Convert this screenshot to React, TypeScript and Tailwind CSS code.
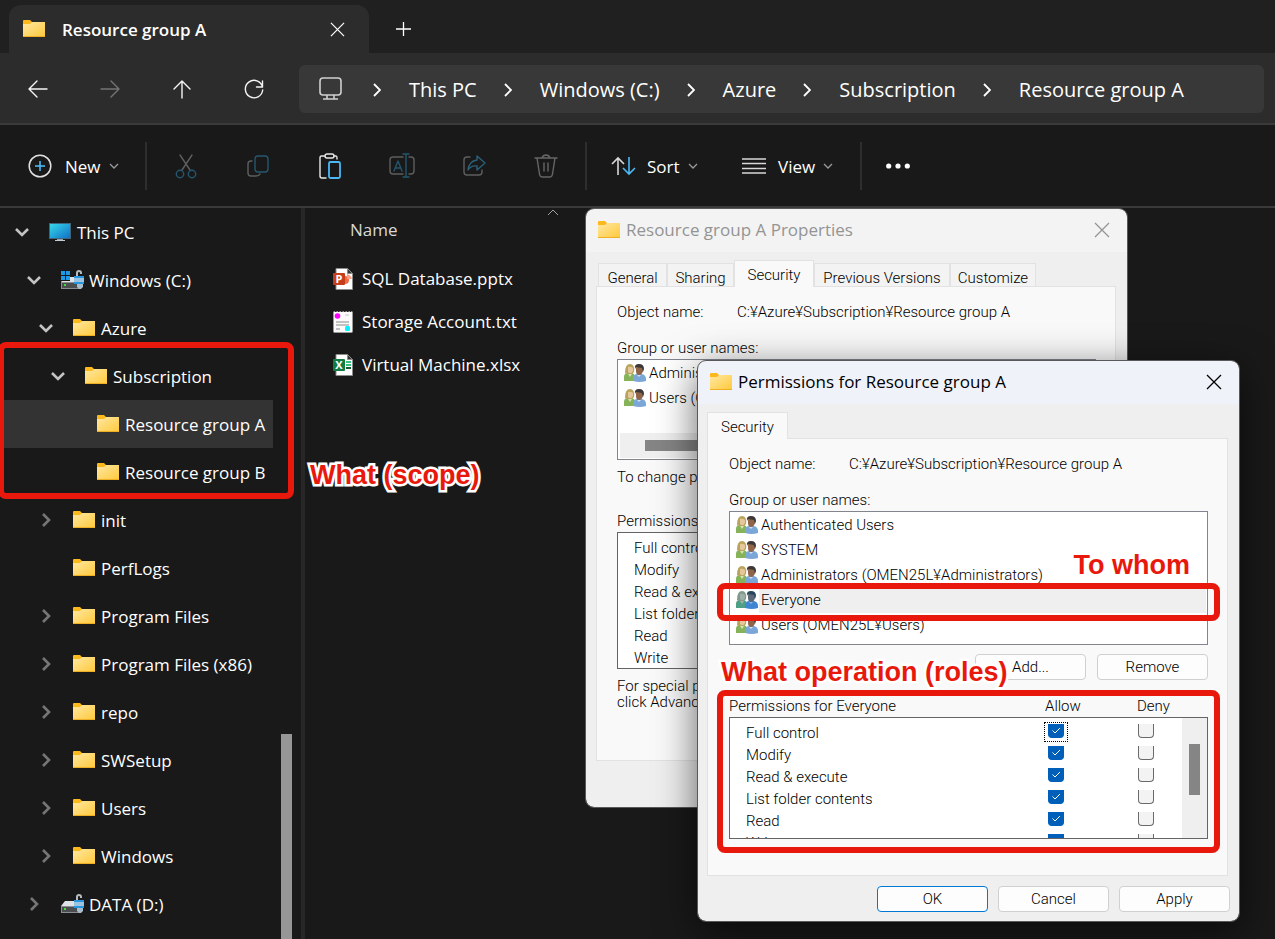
import type { ReactNode } from "react";
import clsx from "clsx";

const UI = "font-['Open_Sans','Noto_Sans',sans-serif]";
const DIALOG = "font-['Roboto','Noto_Sans_CJK_JP',sans-serif] font-light";

const Folder = () => (
  <svg width="22" height="18" viewBox="0 0 22 18" className="shrink-0">
    <defs>
      <linearGradient id="folder" x1="0" y1="0" x2="1" y2="1">
        <stop offset="0" stopColor="#ffe8a3" />
        <stop offset="1" stopColor="#ffc93a" />
      </linearGradient>
    </defs>
    <path d="M0 1Q0 0 1 0H7L9 2H21Q22 2 22 3V8H0Z" fill="#fcb81c" />
    <path d="M0 4H7L9 2H22V17H0Z" fill="url(#folder)" />
    <path d="M0 16H22V17H0Z" fill="#f0ae22" />
  </svg>
);

const Monitor = () => (
  <svg width="22" height="20" viewBox="0 0 22 20" className="shrink-0">
    <defs>
      <linearGradient id="screen" x1="0" y1="0" x2="1" y2="1">
        <stop offset="0" stopColor="#35d8e8" />
        <stop offset="1" stopColor="#1170c8" />
      </linearGradient>
    </defs>
    <rect x="0" y="1" width="22" height="16" fill="#40657a" />
    <rect x="1" y="2" width="20" height="14" fill="url(#screen)" />
    <path d="M8 17H14V18H8Z" fill="#8fa3ad" />
    <path d="M6 18H16V19H6Z" fill="#c5cdd2" />
  </svg>
);

const Drive = ({ system }: { system?: boolean }) => (
  <svg width="24" height="20" viewBox="0 0 24 20" className="-mr-0.5 shrink-0">
    <path d="M4 7H17V12H0Z" fill="#dfe2e6" />
    <path d="M0 12H19V19H0Z" fill="#8b8f93" />
    <path d="M1 13H19V18H1Z" fill="#4b4d50" />
    <rect x="3" y="14" width="2" height="2" fill="#3ee03a" />
    {system && (
      <g>
        <path d="M0 1H9V11H0Z" fill="#191919" />
        <path d="M0 1H4V5H0ZM5 1H9V5H5ZM0 6H4V10H0ZM5 6H9V10H5Z" fill="#1e9be8" />
      </g>
    )}
    <path d="M16 6V3Q16 1 18 1T20 3V4" fill="none" stroke="#b4bcc2" strokeWidth="2" />
    <rect x="13" y="6" width="10" height="8" fill="#9cc3e0" />
    <path d="M13 6H23V8H13ZM13 12H23V14H13Z" fill="#2796df" />
    <path d="M16 14H22V17L20 19H18L16 17Z" fill="#a9bccb" />
  </svg>
);

const Users = ({ tinted }: { tinted?: boolean }) => (
  <svg width="22" height="19" viewBox="0 0 22 19" className="shrink-0">
    <path d="M0 17V13Q0 9 4 9H8Q11 10 11 13V17Z" fill={tinted ? "#4d9f86" : "#86b35a"} />
    <path d="M1 9Q1 0 6 0T10 8L8 10H3Z" fill={tinted ? "#7f9a8c" : "#b8a45c"} />
    <path d="M4 3Q7 2 9 4V7Q7 11 4 8Z" fill={tinted ? "#9fb0a8" : "#e6c79c"} />
    <path d="M4 10L6 13L8 10Z" fill={tinted ? "#a5b3a8" : "#d5e4b4"} />
    <path d="M9 17V14Q10 10 13 10H18Q22 11 22 15V17Q16 19 9 17Z" fill={tinted ? "#3f86d2" : "#7ba6d8"} />
    <path d="M12 4Q12 1 15 1T19 4V7Q18 11 15 11T12 7Z" fill={tinted ? "#5c6878" : "#8f6448"} />
    <path d="M11 5Q10 0 15 0T20 5L19 8L18 4L12 3Z" fill={tinted ? "#29465f" : "#3d3836"} />
    <path d="M13 11L15 13L17 11Z" fill={tinted ? "#8fb8e8" : "#cfe0f4"} />
  </svg>
);

const Cross = ({ size }: { size: number }) => (
  <svg width={size} height={size} viewBox="0 0 16 16" fill="none" stroke="currentColor" strokeWidth="1.300">
    <path d="M1 1L15 15M15 1L1 15" />
  </svg>
);

const Caret = () => (
  <svg width="10" height="6" viewBox="0 0 10 6" fill="none" stroke="#9a9a9a" strokeWidth="1.300">
    <path d="M1 1L5 5L9 1" />
  </svg>
);

const Glyph = ({ children, color = "#f5f5f5" }: { children: ReactNode; color?: string }) => (
  <svg width="26" height="26" viewBox="0 0 26 26" fill="none" stroke={color} strokeWidth="1.400" strokeLinecap="round" strokeLinejoin="round">
    {children}
  </svg>
);

const navItems = [
  { label: "Back", color: "#f5f5f5", icon: <path d="M22 13H4M12 5L4 13L12 21" /> },
  { label: "Forward", color: "#747474", icon: <path d="M4 13H22M14 5L22 13L14 21" /> },
  { label: "Up", color: "#f5f5f5", icon: <path d="M13 22V5M5 13L13 5L21 13" /> },
  { label: "Refresh", color: "#f5f5f5", icon: <path d="M21.500 11A8.700 8.700 0 1 0 21.700 14M21.500 5V11H15.500" /> },
];

const crumbs = ["This PC", "Windows (C:)", "Azure", "Subscription", "Resource group A"];

const actions = [
  {
    label: "Cut",
    icon: (
      <>
        <path d="M7 2L17 17M19 2L9 17" stroke="#5e5e5e" />
        <circle cx="7" cy="21" r="3.700" stroke="#24576f" />
        <circle cx="19" cy="21" r="3.700" stroke="#24576f" />
      </>
    ),
  },
  {
    label: "Copy",
    icon: (
      <>
        <path d="M7 8H6Q3 8 3 11V20Q3 23 6 23H11Q14 23 15 21" stroke="#5e5e5e" />
        <rect x="10" y="3" width="13" height="16" rx="3" stroke="#24576f" />
      </>
    ),
  },
  {
    label: "Paste",
    icon: (
      <>
        <path d="M8 3H4.500Q3 3 3 5V23Q3 25 5 25H9M17 3H19Q20 3 20 5V6" stroke="#e8e8e8" />
        <rect x="8" y="1" width="9" height="4" rx="2" stroke="#e8e8e8" />
        <rect x="12" y="9" width="11" height="16" rx="1.500" stroke="#4cb8f5" strokeWidth="1.800" />
      </>
    ),
  },
  {
    label: "Rename",
    icon: (
      <>
        <path d="M14 4H4Q1 4 1 7V18Q1 21 4 21H14M20 4H22Q25 4 25 7V18Q25 21 22 21H20" stroke="#5e5e5e" />
        <path d="M5 18L9 8L13 18M6.500 15H11.500M14 1H20M14 24H20M17 1V24" stroke="#24576f" />
      </>
    ),
  },
  {
    label: "Share",
    icon: (
      <>
        <path d="M9 4H6Q3 4 3 7V19Q3 22 6 22H18Q21 22 21 19V17" stroke="#5e5e5e" />
        <path d="M16 3L24 10L16 17V13Q10 12 7 17Q8 8 16 7Z" stroke="#2c6078" />
      </>
    ),
  },
  {
    label: "Delete",
    icon: (
      <>
        <path d="M2 5H24M9 5Q10 2 13 2T17 5M4 5L6.500 21Q7 24 9 24H17Q19 24 19.500 21L22 5M11 10V18M15 10V18" stroke="#666" />
      </>
    ),
  },
];

type Node = { name: string; state?: "open" | "closed"; icon?: ReactNode; pad: string; selected?: boolean };

const tree: Node[] = [
  { name: "This PC", state: "open", icon: <Monitor />, pad: "pl-[11px]" },
  { name: "Windows (C:)", state: "open", icon: <Drive system />, pad: "pl-[23px]" },
  { name: "Azure", state: "open", pad: "pl-[35px]" },
  { name: "Subscription", state: "open", pad: "pl-[47px]" },
  { name: "Resource group A", pad: "pl-[59px]", selected: true },
  { name: "Resource group B", pad: "pl-[59px]" },
  { name: "init", state: "closed", pad: "pl-[35px]" },
  { name: "PerfLogs", pad: "pl-[35px]" },
  { name: "Program Files", state: "closed", pad: "pl-[35px]" },
  { name: "Program Files (x86)", state: "closed", pad: "pl-[35px]" },
  { name: "repo", state: "closed", pad: "pl-[35px]" },
  { name: "SWSetup", state: "closed", pad: "pl-[35px]" },
  { name: "Users", state: "closed", pad: "pl-[35px]" },
  { name: "Windows", state: "closed", pad: "pl-[35px]" },
  { name: "DATA (D:)", state: "closed", icon: <Drive />, pad: "pl-[23px]" },
];

const TreeRow = ({ node }: { node: Node }) => (
  <button
    type="button"
    className={clsx(
      "flex h-12 w-[270px] items-center text-left whitespace-nowrap",
      node.pad,
      node.selected && "bg-[#333333]"
    )}
  >
    <span className="mr-[19px] flex w-4 shrink-0 justify-center">
      {node.state && (
        <svg width="16" height="16" viewBox="0 0 16 16" fill="none" strokeWidth="2.600" stroke={node.state === "open" ? "#c4c4c4" : "#767676"}>
          <path d={node.state === "open" ? "M2 5L8 11L14 5" : "M5 2L11 8L5 14"} />
        </svg>
      )}
    </span>
    {node.icon ?? <Folder />}
    <span className="ml-1.5 pt-0.5">{node.name}</span>
  </button>
);

const OfficeIcon = ({ letter, color, children }: { letter: string; color: string; children: ReactNode }) => (
  <svg width="20" height="22" viewBox="0 0 20 22" className="shrink-0">
    <path d="M3 0.500H14.500L19.500 5.500V21.500H3Z" fill="#fff" stroke="#8b8b8b" />
    <path d="M14.500 0.500V5.500H19.500Z" fill="#333" stroke="#8b8b8b" />
    {children}
    <rect x="0" y="5" width="12" height="12" rx="1" fill={color} />
    <text x="6" y="15" fontSize="11" fontWeight="700" textAnchor="middle" fill="#fff">
      {letter}
    </text>
  </svg>
);

const files = [
  {
    name: "SQL Database.pptx",
    icon: (
      <OfficeIcon letter="P" color="#c43e1c">
        <path d="M12 8A4 4 0 0 1 12 16Z" fill="#ed6c47" />
        <path d="M14 6V11H19Q18 7 14 6Z" fill="#ff9e80" />
      </OfficeIcon>
    ),
  },
  {
    name: "Storage Account.txt",
    icon: (
      <svg width="20" height="23" viewBox="0 0 20 23" className="shrink-0">
        <rect x="0.500" y="1.500" width="19" height="21" rx="1" fill="#fafafa" stroke="#9a9a9a" />
        <path d="M2 1H18" stroke="#222" strokeWidth="2" strokeDasharray="1.500 1.500" />
        <path d="M3 12H16M3 15H16M3 19H7" stroke="#c2c2c2" strokeWidth="2" />
        <path d="M12 5H16" stroke="#c9c9c9" />
        <circle cx="4.500" cy="6" r="2.800" fill="#ff00ff" />
        <rect x="12" y="16" width="5" height="5" rx="1.500" fill="#00f6ff" />
      </svg>
    ),
  },
  {
    name: "Virtual Machine.xlsx",
    icon: (
      <OfficeIcon letter="X" color="#107c41">
        <path d="M13 7H18V9H13ZM13 10H18V12H13Z" fill="#33c481" />
        <path d="M13 13H18V15H13Z" fill="#185c37" />
      </OfficeIcon>
    ),
  },
];

const rights = ["Full control", "Modify", "Read & execute", "List folder contents", "Read", "Write"];

const Note = ({ className, children }: { className: string; children: ReactNode }) => (
  <span
    className={clsx(
      "absolute font-['Liberation_Sans',sans-serif] text-[27px] leading-8 font-bold whitespace-nowrap text-[#e8190c] [-webkit-text-stroke:5px_white] [paint-order:stroke_fill]",
      className
    )}
  >
    {children}
  </span>
);

const Highlight = ({ className }: { className: string }) => (
  <div className={clsx("pointer-events-none absolute rounded-lg border-6 border-[#e8190c]", className)} />
);

const Window = ({
  title,
  active,
  className,
  children,
}: {
  title: string;
  active?: boolean;
  className: string;
  children: ReactNode;
}) => (
  <section
    aria-label={title}
    className={clsx(
      "absolute flex flex-col rounded-lg bg-[#efefef] text-black outline-1 outline-[#58585a]",
      DIALOG,
      className
    )}
  >
    <header
      className={clsx(
        "flex h-[43px] shrink-0 items-center gap-1.5 rounded-t-lg px-3 pb-0.5 text-[17px] font-normal",
        UI,
        active ? "bg-[#f0f2fa]" : "bg-[#f3f3f3] text-[#949494]"
      )}
    >
      <Folder />
      <h2 className="grow">{title}</h2>
      <button type="button" aria-label={`Close ${title}`} className="mr-[5px]">
        <Cross size={16} />
      </button>
    </header>
    {children}
  </section>
);

const ObjectName = () => (
  <dl className="flex">
    <dt className="w-30">Object name:</dt>
    <dd>C:¥Azure¥Subscription¥Resource group A</dd>
  </dl>
);

const PrincipalRow = ({ name, selected }: { name: string; selected?: boolean }) => (
  <li className="flex h-[25px] items-center gap-px pr-px pl-1.5">
    <Users tinted={selected} />
    <span className={clsx("grow pl-0.5 leading-[25px]", selected && "bg-[#efefef]")}>{name}</span>
  </li>
);

const PushButton = ({ children, primary }: { children: ReactNode; primary?: boolean }) => (
  <button
    type="button"
    className={clsx("h-[26px] w-[111px] rounded-sm border bg-[#fdfdfd]", primary ? "border-[#0078d4]" : "border-[#d0d0d0]")}
  >
    {children}
  </button>
);

const Check = ({ label, checked, focused }: { label: string; checked?: boolean; focused?: boolean }) => (
  <span className={clsx("grid h-5 w-6 justify-center border border-dotted pt-px", focused ? "border-black" : "border-transparent")}>
    <input
      type="checkbox"
      aria-label={label}
      defaultChecked={checked}
      className="col-start-1 row-start-1 h-3.5 w-4 appearance-none rounded-b-sm border border-t-0 border-[#6a6a6a] bg-[#f3f3f3] checked:border-[#005fb8] checked:bg-[#005fb8]"
    />
    {checked && (
      <svg width="16" height="14" viewBox="0 0 16 14" fill="none" stroke="#fff" className="pointer-events-none col-start-1 row-start-1">
        <path d="M4.500 6.500L7 9L12 4" />
      </svg>
    )}
  </span>
);

const PropertiesWindow = () => (
  <Window title="Resource group A Properties" className="top-[209px] left-[586px] h-[598px] w-[541px]">
    <div className="flex grow flex-col px-2.5 pt-2 text-[15px] leading-4">
      <div role="tablist" className="flex items-end pl-0.5">
        {["General", "Sharing", "Security", "Previous Versions", "Customize"].map((tab) => (
          <button
            key={tab}
            type="button"
            role="tab"
            className={clsx(
              "border border-b-0 border-[#e2e2e2] text-center whitespace-nowrap",
              tab === "Security" ? "z-10 -mb-px h-[27px] w-20 bg-[#f9f9f9] pt-0.5" : "h-[23px] bg-[#f3f3f3] pt-1.5",
              tab === "General" && "w-[69px]",
              tab === "Sharing" && "w-[67px]",
              tab === "Previous Versions" && "w-[136px]",
              tab === "Customize" && "w-[86px]"
            )}
          >
            {tab}
          </button>
        ))}
      </div>
      <div className="mr-px h-[475px] border border-[#e2e2e2] bg-[#f9f9f9] pt-[17px] pr-[19px] pl-5">
        <ObjectName />
        <p className="mt-5">Group or user names:</p>
        <ul className="mt-[3px] h-[101px] border border-[#82858d] bg-white pt-px">
          <PrincipalRow name="Administrators (OMEN25L¥Administrators)" />
          <PrincipalRow name="Users (OMEN25L¥Users)" />
          <li aria-hidden className="mx-0.5 mt-[22px] flex h-[25px] items-center bg-[#efefef] pl-[25px]">
            <div className="h-[11px] w-80 bg-[#858585]" />
          </li>
        </ul>
        <p className="mt-[9px]">To change permissions, click Edit.</p>
        <p className="mt-7">Permissions for Administrators</p>
        <ul className="mt-[3px] h-[137px] border border-[#646464] bg-white pt-1 pl-4">
          {rights.map((right) => (
            <li key={right} className="h-[22px] leading-[22px]">
              {right}
            </li>
          ))}
        </ul>
        <p className="mt-[9px] w-80">
          For special permissions or advanced settings,
          <br />
          click Advanced.
        </p>
      </div>
    </div>
  </Window>
);

const principals = [
  "Authenticated Users",
  "SYSTEM",
  "Administrators (OMEN25L¥Administrators)",
  "Everyone",
  "Users (OMEN25L¥Users)",
];

const PermissionsWindow = () => (
  <Window
    title="Permissions for Resource group A"
    active
    className="top-[361px] left-[698px] h-[560px] w-[541px] [box-shadow:0_10px_40px_#000000a0]"
  >
    <div className="flex grow flex-col px-[9px] pt-2 text-[15px] leading-4">
      <div role="tablist" className="flex">
        <button type="button" role="tab" className="z-10 -mb-px h-[27px] w-[81px] border border-b-0 border-[#e2e2e2] bg-[#f9f9f9] pt-0.5">
          Security
        </button>
      </div>
      <div className="mr-0.5 h-[438px] border border-[#e2e2e2] bg-[#f9f9f9] pt-[17px] pr-[19px] pl-[21px]">
        <ObjectName />
        <p className="mt-5">Group or user names:</p>
        <div className="relative mt-[3px]">
          <ul className="h-[134px] border border-[#82858d] bg-white pt-px">
            {principals.map((name) => (
              <PrincipalRow key={name} name={name} selected={name === "Everyone"} />
            ))}
          </ul>
          <Highlight className="-inset-x-3 top-[72px] h-[38px]" />
          <Note className="top-[38px] right-[18px]">To whom</Note>
        </div>
        <div className="relative mt-[9px] flex justify-end gap-[11px]">
          <PushButton>Add...</PushButton>
          <PushButton>Remove</PushButton>
          <Note className="top-0.5 -left-2">What operation (roles)</Note>
        </div>
        <div className="relative mt-[18px]">
          <div className="flex">
            <span className="grow">Permissions for Everyone</span>
            <span className="w-[92px]">Allow</span>
            <span className="w-[71px]">Deny</span>
          </div>
          <div className="mt-[3px] flex h-[122px] overflow-hidden border border-[#646464] bg-white">
            <ul className="grow pt-1 pl-4">
              {rights.map((right, i) => (
                <li key={right} className="flex h-[22px]">
                  <span className="grow leading-[22px]">{right}</span>
                  <span className="w-[90px]">
                    <Check label={`Allow ${right}`} checked focused={i === 0} />
                  </span>
                  <span className="w-12">
                    <Check label={`Deny ${right}`} />
                  </span>
                </li>
              ))}
            </ul>
            <div aria-hidden className="flex w-[25px] justify-center bg-[#efefef] pt-[26px]">
              <div className="h-[51px] w-[11px] bg-[#858585]" />
            </div>
          </div>
          <Highlight className="-inset-x-3 -top-2 h-[163px]" />
        </div>
      </div>
      <footer className="mt-2.5 flex justify-end gap-2.5">
        <PushButton primary>OK</PushButton>
        <PushButton>Cancel</PushButton>
        <PushButton>Apply</PushButton>
      </footer>
    </div>
  </Window>
);

const Divider = () => <div className="h-12 w-0.5 bg-[#2e2e2e]" />;

export default function App() {
  return (
    <main className={clsx("relative flex h-screen w-full flex-col overflow-hidden bg-[#191919] text-[17px] leading-6 text-white", UI)}>
      <div className="flex h-[53px] shrink-0 items-end bg-[#202020] pl-[9px]">
        <div className="flex h-12 w-[360px] items-center rounded-t-xl bg-[#2c2c2c] pr-6 pl-3.5">
          <Folder />
          <span className="ml-[17px] grow pt-0.5 font-semibold">Resource group A</span>
          <button type="button" aria-label="Close tab">
            <Cross size={15} />
          </button>
        </div>
        <button type="button" aria-label="New tab" className="mb-3 ml-[27px]">
          <svg width="15" height="24" viewBox="0 0 15 24" stroke="#fff" strokeWidth="1.300">
            <path d="M7.500 5V19M0 12H15" />
          </svg>
        </button>
      </div>

      <nav className="flex h-[72px] shrink-0 items-center border-b-2 border-[#3a3a3a] bg-[#2c2c2c] pt-0.5 pr-[11px] pl-[25px]">
        <div className="flex w-[274px] gap-[46px]">
          {navItems.map((item) => (
            <button key={item.label} type="button" aria-label={item.label}>
              <Glyph color={item.color}>{item.icon}</Glyph>
            </button>
          ))}
        </div>
        <ol className="flex h-12 grow items-center rounded-md bg-[#383838] pt-0.5 pl-5 text-[20px]">
          <li className="pr-1 pb-0.5">
            <svg width="23" height="24" viewBox="0 0 23 24" fill="none" stroke="#cfcfcf" strokeWidth="1.600">
              <rect x="1" y="1" width="21" height="17" rx="3" />
              <path d="M8 18V22M15 18V22M4 22H19" />
            </svg>
          </li>
          {crumbs.map((crumb) => (
            <li key={crumb} className="flex items-center">
              <svg width="8" height="14" viewBox="0 0 8 14" fill="none" stroke="#fff" strokeWidth="1.800" className="mr-7 ml-[27px]">
                <path d="M1 1L7 7L1 13" />
              </svg>
              <a href="#">{crumb}</a>
            </li>
          ))}
        </ol>
      </nav>

      <div role="toolbar" className="flex h-[83px] shrink-0 items-center border-b-2 border-[#3a3a3a] pl-7">
        <button type="button" className="flex w-[117px] items-center">
          <svg width="24" height="24" viewBox="0 0 24 24" fill="none" strokeWidth="1.500">
            <circle cx="12" cy="12" r="10.800" stroke="#e0e0e0" />
            <path d="M12 7V17M7 12H17" stroke="#4cc2ff" />
          </svg>
          <span className="mr-2 ml-[13px] pt-0.5">New</span>
          <Caret />
        </button>
        <Divider />
        <div className="flex gap-[46px] px-[26px]">
          {actions.map((action) => (
            <button key={action.label} type="button" aria-label={action.label}>
              <Glyph>{action.icon}</Glyph>
            </button>
          ))}
        </div>
        <Divider />
        <button type="button" className="ml-6 flex w-[131px] items-center">
          <svg width="25" height="20" viewBox="0 0 25 20" fill="none" strokeWidth="1.600">
            <path d="M7 19V2M1 8L7 2L13 8" stroke="#d8d8d8" />
            <path d="M18 1V18M12 12L18 18L24 12" stroke="#4cb8f5" />
          </svg>
          <span className="mr-2 ml-[11px] pt-0.5">Sort</span>
          <Caret />
        </button>
        <button type="button" className="flex w-[118px] items-center">
          <svg width="24" height="16" viewBox="0 0 24 16" stroke="#d8d8d8" strokeWidth="1.400">
            <path d="M0 1H24M0 5.500H24M0 10.500H24M0 15H24" />
          </svg>
          <span className="mr-2 ml-3 pt-0.5">View</span>
          <Caret />
        </button>
        <Divider />
        <button type="button" aria-label="See more" className="ml-6">
          <svg width="24" height="6" viewBox="0 0 24 6" fill="#fff">
            <circle cx="2.700" cy="3" r="2.600" />
            <circle cx="12" cy="3" r="2.600" />
            <circle cx="21.300" cy="3" r="2.600" />
          </svg>
        </button>
      </div>

      <div className="flex min-h-0 grow">
        <aside className="flex w-[305px] shrink-0 justify-between border-r-4 border-[#272727]">
          <div className="relative pl-[3px]">
            {tree.map((node) => (
              <TreeRow key={node.name} node={node} />
            ))}
            <Highlight className="top-[134px] -left-0.5 h-[157px] w-[296px]" />
          </div>
          <div aria-hidden className="mt-[526px] mr-[9px] w-[11px] bg-[#969696]" />
        </aside>
        <section className="relative grow pl-7">
          <div className="flex h-[49px] items-start">
            <button type="button" className="mt-2.5 ml-[17px] w-[197px] text-left text-[#d8d8d8]">
              Name
            </button>
            <svg width="12" height="7" viewBox="0 0 12 7" fill="none" stroke="#a0a0a0" className="mt-px">
              <path d="M1 6L6 1L11 6" />
            </svg>
          </div>
          <ul>
            {files.map((file) => (
              <li key={file.name} className="flex h-[43px] items-center gap-[9px]">
                {file.icon}
                <a href="#">{file.name}</a>
              </li>
            ))}
          </ul>
          <Note className="top-[251px] left-[5px]">What (scope)</Note>
        </section>
      </div>

      <PropertiesWindow />
      <PermissionsWindow />
    </main>
  );
}
